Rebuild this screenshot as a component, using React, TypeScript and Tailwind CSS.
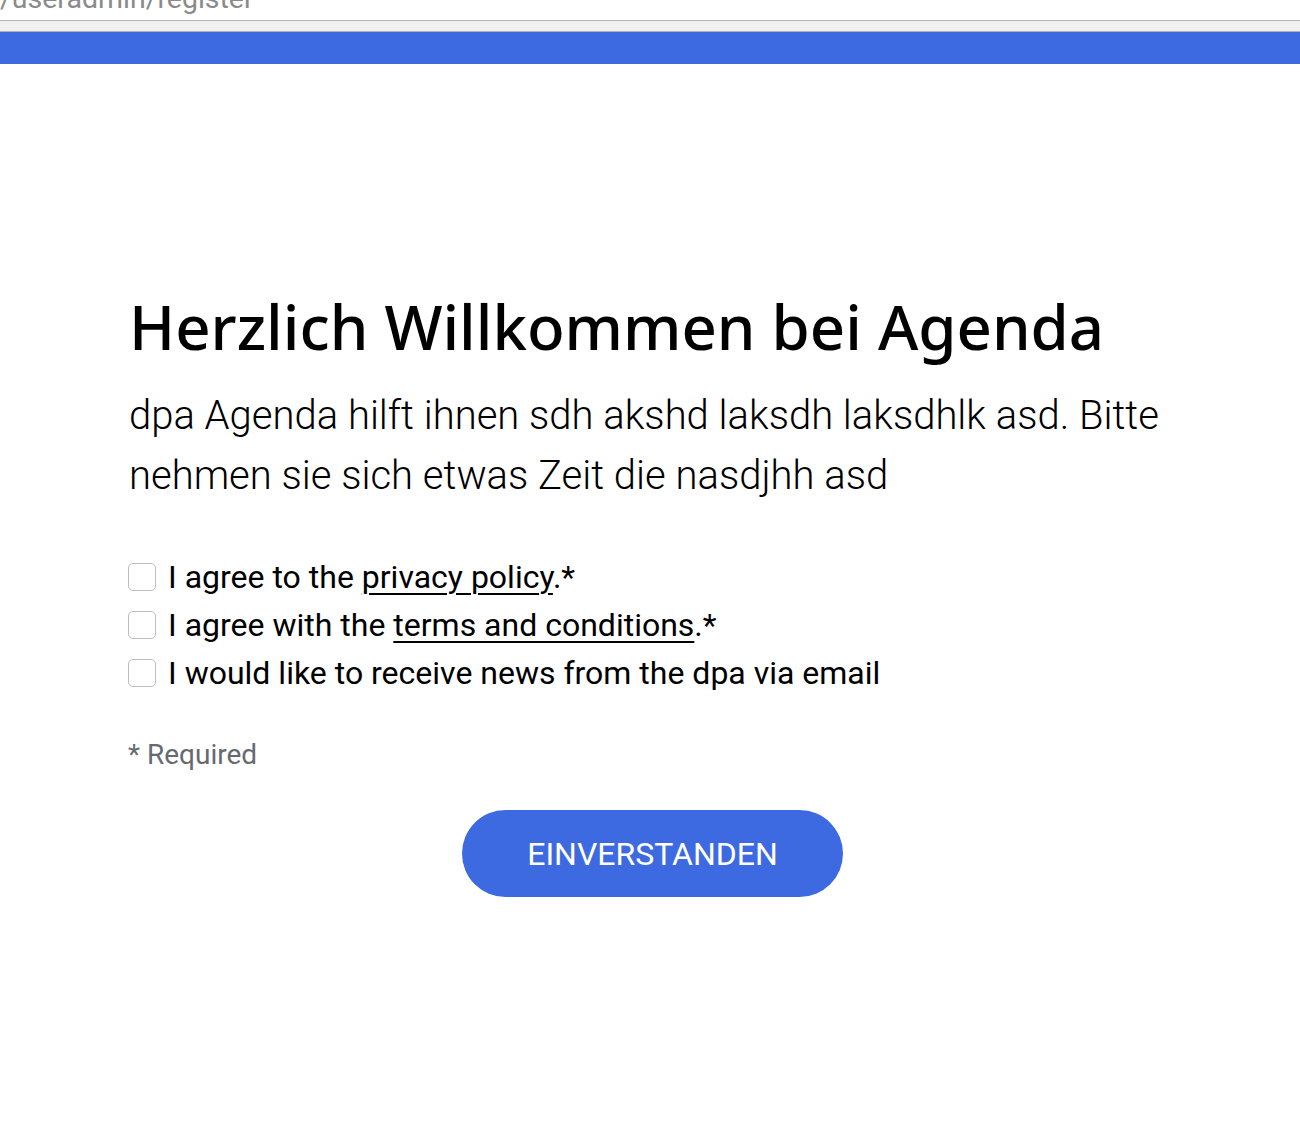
export default function App() {
  const checks = [
    { id: 'privacy', pre: 'I agree to the ', link: 'privacy policy', post: '.*' },
    { id: 'terms', pre: 'I agree with the ', link: 'terms and conditions', post: '.*' },
    { id: 'news', pre: 'I would like to receive news from the dpa via email', link: '', post: '' },
  ];

  return (
    <div className="min-h-[1142px] bg-white" style={{ fontFamily: 'Roboto, sans-serif' }}>
      {/* browser chrome leftover */}
      <div className="h-[20px] overflow-hidden bg-white">
        <div className="mt-[-16px] text-[28.5px] leading-[30px] text-[#8a8a8a]">/useradmin/register</div>
      </div>
      <div className="h-[12px] border-y border-[#b3b3b3] bg-[#f1f1f1]" />
      <div className="h-[32px] bg-[#3e6ae1]" />

      <main className="mx-auto w-[1040px] pt-[222px]">
        <h1
          className="ml-[-1px] text-[61.7px] font-medium leading-[80px] text-black"
          style={{ fontFamily: '"Noto Sans", sans-serif' }}
        >
          Herzlich Willkommen bei Agenda
        </h1>
        <p className="ml-[-1px] mt-[20px] text-[40px] font-light leading-[60px] text-black">
          dpa Agenda hilft ihnen sdh akshd laksdh laksdhlk asd. Bitte nehmen sie sich etwas Zeit die nasdjhh asd
        </p>

        <div className="mt-[47px] flex flex-col">
          {checks.map((c) => (
            <label key={c.id} className="flex h-[48px] items-center gap-[12px] text-[32px] text-black">
              <span className="ml-[-2px] h-[28px] w-[28px] shrink-0 rounded-[5px] border border-[#bdbdbd] bg-white" />
              <span>
                {c.pre}
                {c.link && <a className="underline underline-offset-[5px] decoration-[2px]">{c.link}</a>}
                {c.post}
              </span>
            </label>
          ))}
        </div>

        <p className="ml-[-2px] mt-[37px] text-[28px] text-[#666a70]">* Required</p>

        <div className="mt-[34px] flex justify-center pl-[5px]">
          <button className="h-[87px] w-[381px] rounded-full bg-[#3e6ae1] text-[32px] uppercase text-white">
            Einverstanden
          </button>
        </div>
      </main>
    </div>
  );
}
